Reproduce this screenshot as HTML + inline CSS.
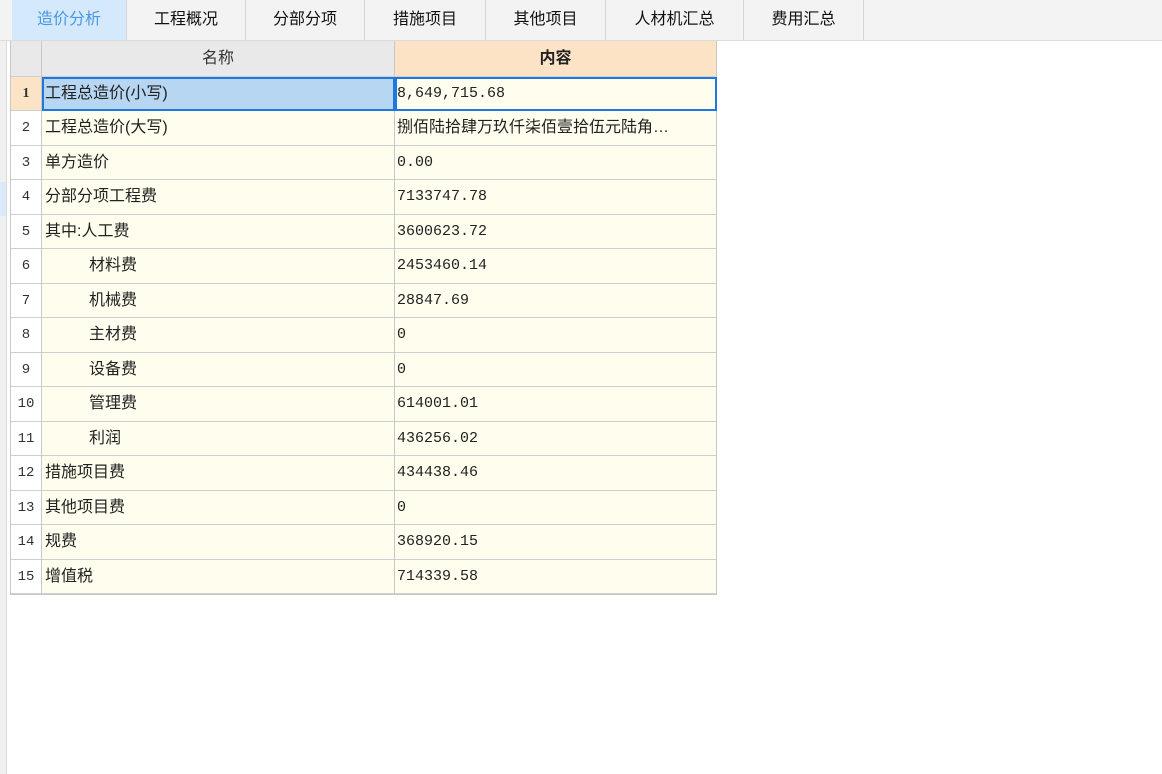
<!DOCTYPE html>
<html><head><meta charset="utf-8"><style>
body{margin:0;width:1162px;height:774px;background:#fff;position:relative;overflow:hidden;font-family:"Liberation Sans","Noto Sans CJK SC",sans-serif;}
.tabs{position:absolute;left:0;top:0;width:1162px;height:40px;background:#f3f3f3;border-bottom:1px solid #dcdcdc;}
.tab{position:absolute;top:0;height:40px;line-height:40px;text-align:center;font-size:16px;color:#111;border-right:1px solid #d6d6d6;}
.tab.act{background:#d4e9fb;color:#4a98e0;}
.side{position:absolute;left:0;top:41px;width:6px;height:733px;background:#f0f0f0;border-right:1px solid #d8d8d8;}
.sidehl{position:absolute;left:0;top:182px;width:6px;height:34px;background:#dbeafa;}
.grid{position:absolute;left:10px;top:41px;display:grid;grid-template-columns:31px 353px 322px;grid-template-rows:36px repeat(15,34.47px);border-left:1px solid #c8c8c8;border-bottom:1px solid #c8c8c8;}
.grid div{border-right:1px solid #c8c8c8;border-bottom:1px solid #cfcfcf;box-sizing:border-box;overflow:hidden;white-space:nowrap;}
.h{background:#e9e9e9;text-align:center;line-height:35px;font-size:16px;color:#333;}
.h2{background:#fde3c6;text-align:center;line-height:35px;font-size:16px;font-weight:bold;color:#222;}
.n{background:#fff;text-align:center;line-height:34px;font-family:"Liberation Mono",monospace;font-size:14px;color:#333;}
.nm{background:#fffeee;padding-left:3px;line-height:33px;font-size:16px;color:#222;}
.v{background:#fffeee;padding-left:2px;line-height:34px;font-family:"Liberation Mono",monospace;font-size:15px;color:#222;}
.vz{font-family:"Liberation Sans","Noto Sans CJK SC",sans-serif;font-size:16px;line-height:33px;}
.in{padding-left:47px;}
.sel1{background:#fde3c6!important;font-weight:bold;font-family:"Liberation Serif",serif!important;}
.sel2{background:#b7d6f2!important;outline:2px solid #1f78e0;outline-offset:-2px;}
.sel3{outline:2px solid #1f78e0;outline-offset:-2px;}
</style></head><body>
<div class="tabs">
<div class="tab act" style="left:12px;width:114px">造价分析</div>
<div class="tab" style="left:127px;width:118px">工程概况</div>
<div class="tab" style="left:246px;width:118px">分部分项</div>
<div class="tab" style="left:365px;width:120px">措施项目</div>
<div class="tab" style="left:486px;width:119px">其他项目</div>
<div class="tab" style="left:606px;width:137px">人材机汇总</div>
<div class="tab" style="left:744px;width:119px">费用汇总</div>
</div>
<div class="side"></div><div class="sidehl"></div>
<div class="grid">
<div class="h"></div><div class="h">名称</div><div class="h2">内容</div>
<div class="n sel1">1</div><div class="nm sel2">工程总造价(小写)</div><div class="v sel3">8,649,715.68</div>
<div class="n">2</div><div class="nm">工程总造价(大写)</div><div class="v vz">捌佰陆拾肆万玖仟柒佰壹拾伍元陆角…</div>
<div class="n">3</div><div class="nm">单方造价</div><div class="v">0.00</div>
<div class="n">4</div><div class="nm">分部分项工程费</div><div class="v">7133747.78</div>
<div class="n">5</div><div class="nm">其中:人工费</div><div class="v">3600623.72</div>
<div class="n">6</div><div class="nm in">材料费</div><div class="v">2453460.14</div>
<div class="n">7</div><div class="nm in">机械费</div><div class="v">28847.69</div>
<div class="n">8</div><div class="nm in">主材费</div><div class="v">0</div>
<div class="n">9</div><div class="nm in">设备费</div><div class="v">0</div>
<div class="n">10</div><div class="nm in">管理费</div><div class="v">614001.01</div>
<div class="n">11</div><div class="nm in">利润</div><div class="v">436256.02</div>
<div class="n">12</div><div class="nm">措施项目费</div><div class="v">434438.46</div>
<div class="n">13</div><div class="nm">其他项目费</div><div class="v">0</div>
<div class="n">14</div><div class="nm">规费</div><div class="v">368920.15</div>
<div class="n">15</div><div class="nm">增值税</div><div class="v">714339.58</div>
</div>
</body></html>
